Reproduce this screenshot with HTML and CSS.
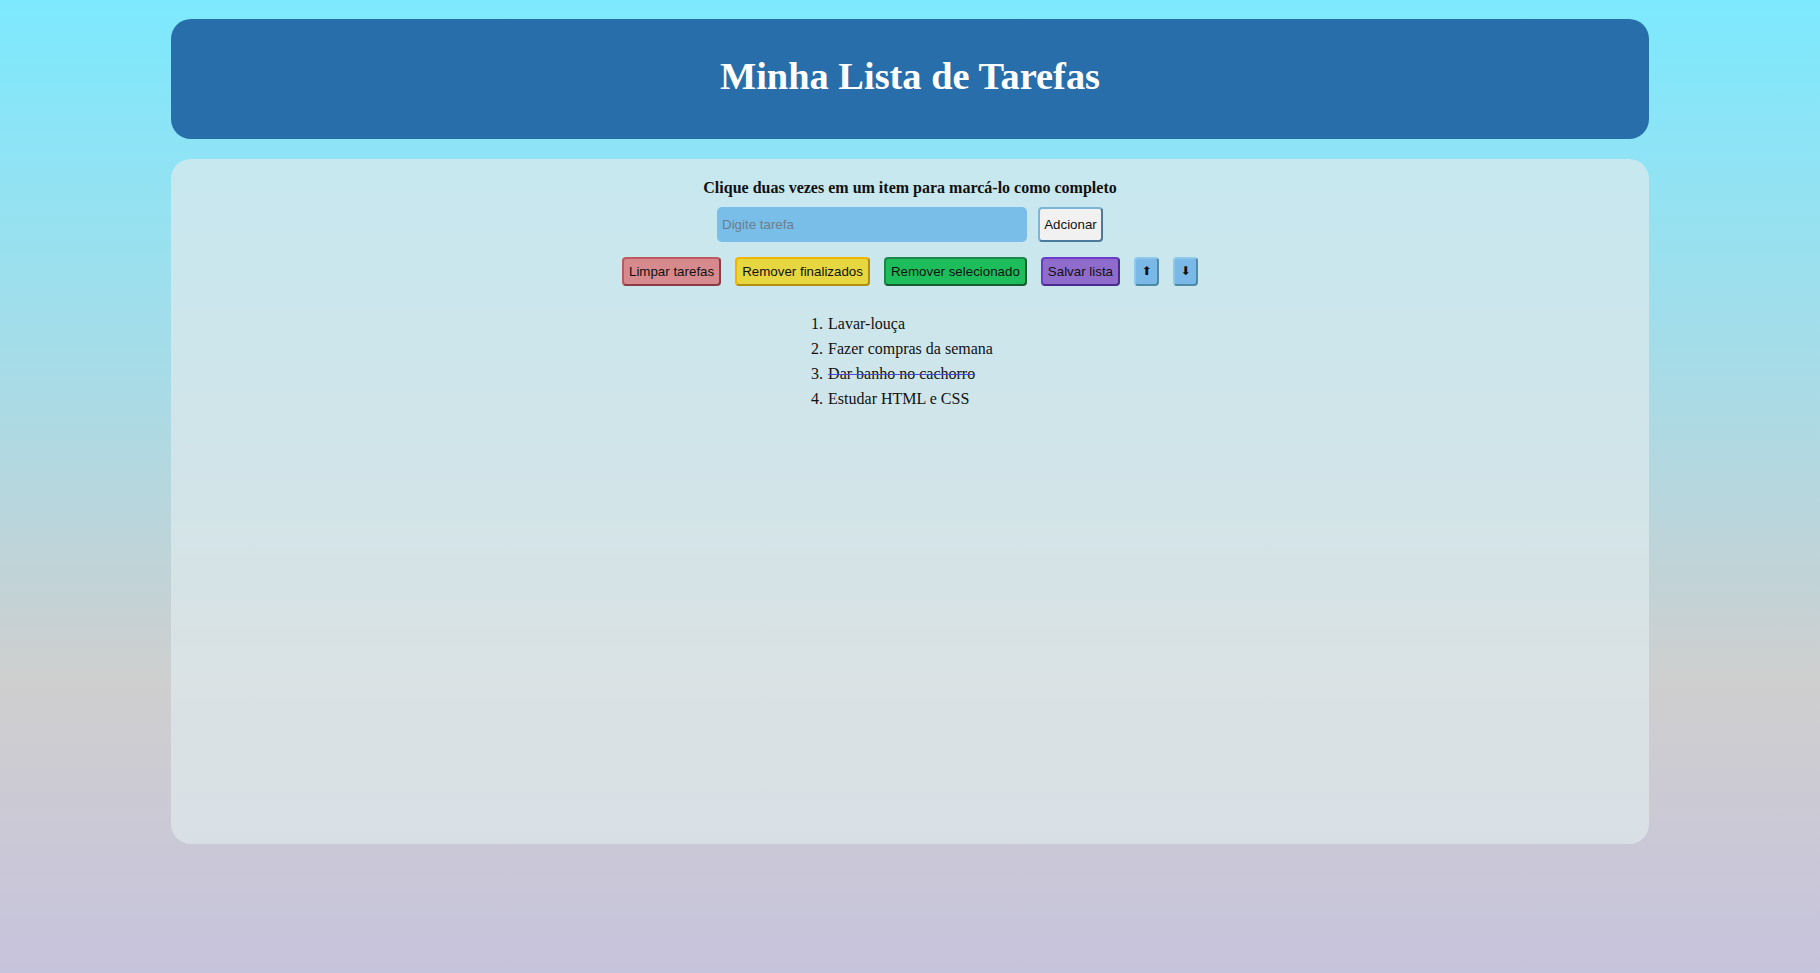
FILE: index.html
```html
<!DOCTYPE html>
<html lang="pt-BR">
<head>
<meta charset="utf-8">
<title>Minha Lista de Tarefas</title>
<link rel="stylesheet" href="styles.css">
</head>
<body>
<div class="page">
  <header class="header">
    <h1 class="title">Minha Lista de Tarefas</h1>
  </header>
  <main class="card">
    <p class="hint">Clique duas vezes em um item para marcá-lo como completo</p>
    <div class="add-row">
      <input class="task-input" type="text" placeholder="Digite tarefa">
      <button class="btn btn-add">Adcionar</button>
    </div>
    <div class="actions">
      <button class="btn btn-clear">Limpar tarefas</button>
      <button class="btn btn-done">Remover finalizados</button>
      <button class="btn btn-selected">Remover selecionado</button>
      <button class="btn btn-save">Salvar lista</button>
      <button class="btn btn-arrow">&#x2B06;&#xFE0E;</button>
      <button class="btn btn-arrow">&#x2B07;&#xFE0E;</button>
    </div>
    <div class="list-wrap">
      <ol class="tasks">
        <li>Lavar-louça</li>
        <li>Fazer compras da semana</li>
        <li class="completed">Dar banho no cachorro</li>
        <li>Estudar HTML e CSS</li>
      </ol>
    </div>
  </main>
</div>
</body>
</html>
```

FILE: styles.css
```css
html, body {
  margin: 0;
  padding: 0;
  height: 100%;
}

body {
  background: linear-gradient(to bottom, #7de9fe 0%, #a9dbe6 40%, #cfcfcf 70%, #c6c3dc 100%);
  font-family: "Liberation Serif", "Times New Roman", serif;
  color: #111;
  min-height: 973px;
}

.page {
  width: 1478px;
  margin: 0 auto;
  padding-top: 19px;
}

.header {
  height: 120px;
  background: #276eaa;
  border-radius: 20px;
  display: flex;
  align-items: center;
  justify-content: center;
}

.title {
  margin: 0;
  color: #fff;
  font-size: 38.4px;
  font-weight: bold;
  padding-bottom: 6px;
}

.card {
  margin-top: 20px;
  height: 685px;
  box-sizing: border-box;
  background: rgba(222, 233, 237, 0.7);
  border-radius: 20px;
  padding-top: 20px;
  display: flex;
  flex-direction: column;
  align-items: center;
}

.hint {
  margin: 0;
  font-size: 16px;
  font-weight: bold;
  line-height: 18px;
}

.add-row {
  margin-top: 10px;
  display: flex;
  gap: 11px;
}

.task-input {
  width: 310px;
  height: 35px;
  box-sizing: border-box;
  border: none;
  border-radius: 5px;
  background: #78bee8;
  padding: 0 5px;
  font-family: "Liberation Sans", Arial, sans-serif;
  font-size: 13.33px;
  color: #222;
  outline: none;
}

.task-input::placeholder {
  color: #6b7f8c;
}

.btn {
  font-family: "Liberation Sans", Arial, sans-serif;
  font-size: 13.33px;
  line-height: 15px;
  color: #111;
  padding: 5px 5px;
  border-width: 2px;
  border-style: solid;
  border-radius: 4px;
  cursor: pointer;
  margin: 0;
  white-space: nowrap;
}

.btn-add {
  height: 35px;
  width: 65px;
  padding: 0;
  background: #f1f1f1;
  border-color: #7bb6d8 #4a7b9b #4a7b9b #7bb6d8;
}

.actions {
  margin-top: 15px;
  display: flex;
  gap: 14px;
}

.btn-clear {
  background: #d68a8d;
  border-color: #c0595f #8b3b46 #8b3b46 #c0595f;
}

.btn-done {
  background: #e6d640;
  border-color: #f1b500 #b38d0c #b38d0c #f1b500;
}

.btn-selected {
  background: #1dbd5b;
  border-color: #1b8a48 #155c33 #155c33 #1b8a48;
}

.btn-save {
  background: #8f6ccb;
  border-color: #6a3cc8 #4c2a90 #4c2a90 #6a3cc8;
}

.btn-arrow {
  width: 25px;
  padding: 5px 0;
  background: #7ab8e8;
  border-color: #8ec8ea #4d8aa8 #4d8aa8 #8ec8ea;
  font-size: 12px;
  font-family: "DejaVu Sans", sans-serif;
}

.list-wrap {
  margin-top: 25px;
  display: flex;
  justify-content: center;
  margin-right: 40px;
}

.tasks {
  margin: 0;
  padding: 0 0 0 40px;
  font-size: 16px;
  line-height: 25px;
}

.tasks li {
  padding-left: 1px;
}

.completed {
  text-decoration: line-through;
  text-decoration-color: #4a4ad8;
}
```
